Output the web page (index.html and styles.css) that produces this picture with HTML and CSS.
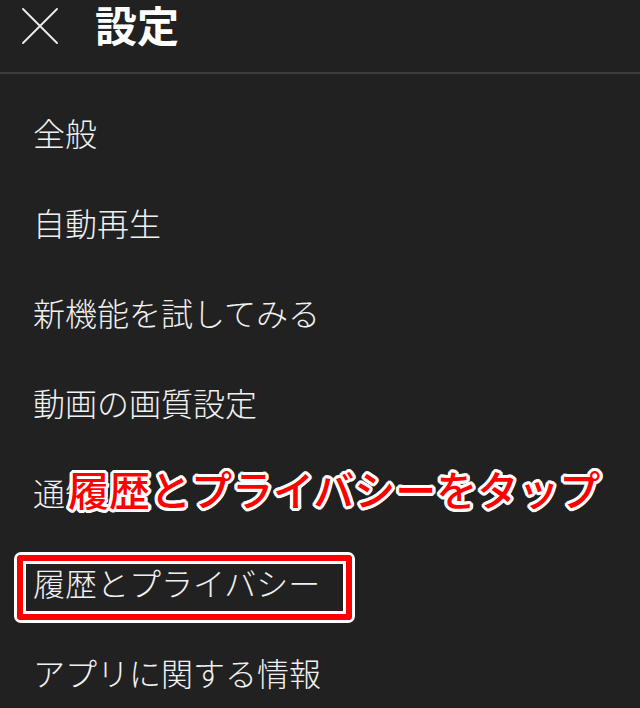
FILE: index.html
```html
<!DOCTYPE html>
<html lang="ja">
<head>
<meta charset="utf-8">
<title>設定</title>
<link rel="stylesheet" href="styles.css">
</head>
<body>
<header class="header">
  <svg class="close" width="36" height="36" viewBox="0 0 36 36" aria-hidden="true">
    <path d="M1 1 L35 35 M35 1 L1 35" stroke="#eeeeee" stroke-width="1.8" stroke-linecap="round" fill="none"/>
  </svg>
  <h1 class="title">設定</h1>
</header>
<div class="divider"></div>
<ul class="menu">
  <li class="item">全般</li>
  <li class="item">自動再生</li>
  <li class="item">新機能を試してみる</li>
  <li class="item">動画の画質設定</li>
  <li class="item">通知<span class="callout">履歴とプライバシーをタップ</span></li>
  <li class="item">履歴とプライバシー<div class="highlight"><div class="highlight-red"><div class="highlight-inner"></div></div></div></li>
  <li class="item">アプリに関する情報</li>
</ul>
</body>
</html>
```

FILE: styles.css
```css
html, body {
  margin: 0;
  padding: 0;
  background: #212121;
}

body {
  width: 640px;
  height: 708px;
  overflow: hidden;
  font-family: "Noto Sans CJK JP", "Noto Sans", sans-serif;
  color: #f1f1f1;
}

.header {
  display: flex;
  align-items: flex-start;
  height: 72px;
}

.close {
  display: block;
  margin-left: 22px;
  margin-top: 8px;
}

.title {
  margin: 0 0 0 37px;
  font-size: 42px;
  font-weight: 700;
  line-height: 47px;
  color: #ffffff;
}

.divider {
  height: 2px;
  background: #3c3c3c;
}

.menu {
  list-style: none;
  margin: 0;
  padding: 13px 0 0 0;
}

.item {
  position: relative;
  height: 90px;
  line-height: 90px;
  padding-left: 33px;
  font-size: 32px;
  font-weight: 300;
  white-space: nowrap;
}

.callout {
  position: absolute;
  left: 68px;
  top: 21px;
  font-size: 41px;
  line-height: 41px;
  font-weight: 500;
  color: #ff0000;
  text-shadow:
    2px 0 0 #fff, -2px 0 0 #fff, 0 2px 0 #fff, 0 -2px 0 #fff,
    2px 2px 0 #fff, -2px -2px 0 #fff, 2px -2px 0 #fff, -2px 2px 0 #fff,
    3px 0 0 #fff, -3px 0 0 #fff, 0 3px 0 #fff, 0 -3px 0 #fff,
    1px 3px 0 #fff, -1px 3px 0 #fff, 1px -3px 0 #fff, -1px -3px 0 #fff,
    3px 1px 0 #fff, 3px -1px 0 #fff, -3px 1px 0 #fff, -3px -1px 0 #fff;
}

.highlight {
  position: absolute;
  left: 14px;
  top: 15px;
  width: 341px;
  height: 71px;
  box-sizing: border-box;
  border: 3px solid #ffffff;
  border-radius: 7px;
}

.highlight-red {
  box-sizing: border-box;
  width: 100%;
  height: 100%;
  border: 6px solid #ff0000;
  border-radius: 4px;
}

.highlight-inner {
  box-sizing: border-box;
  width: 100%;
  height: 100%;
  border: 3px solid #ffffff;
}
```
